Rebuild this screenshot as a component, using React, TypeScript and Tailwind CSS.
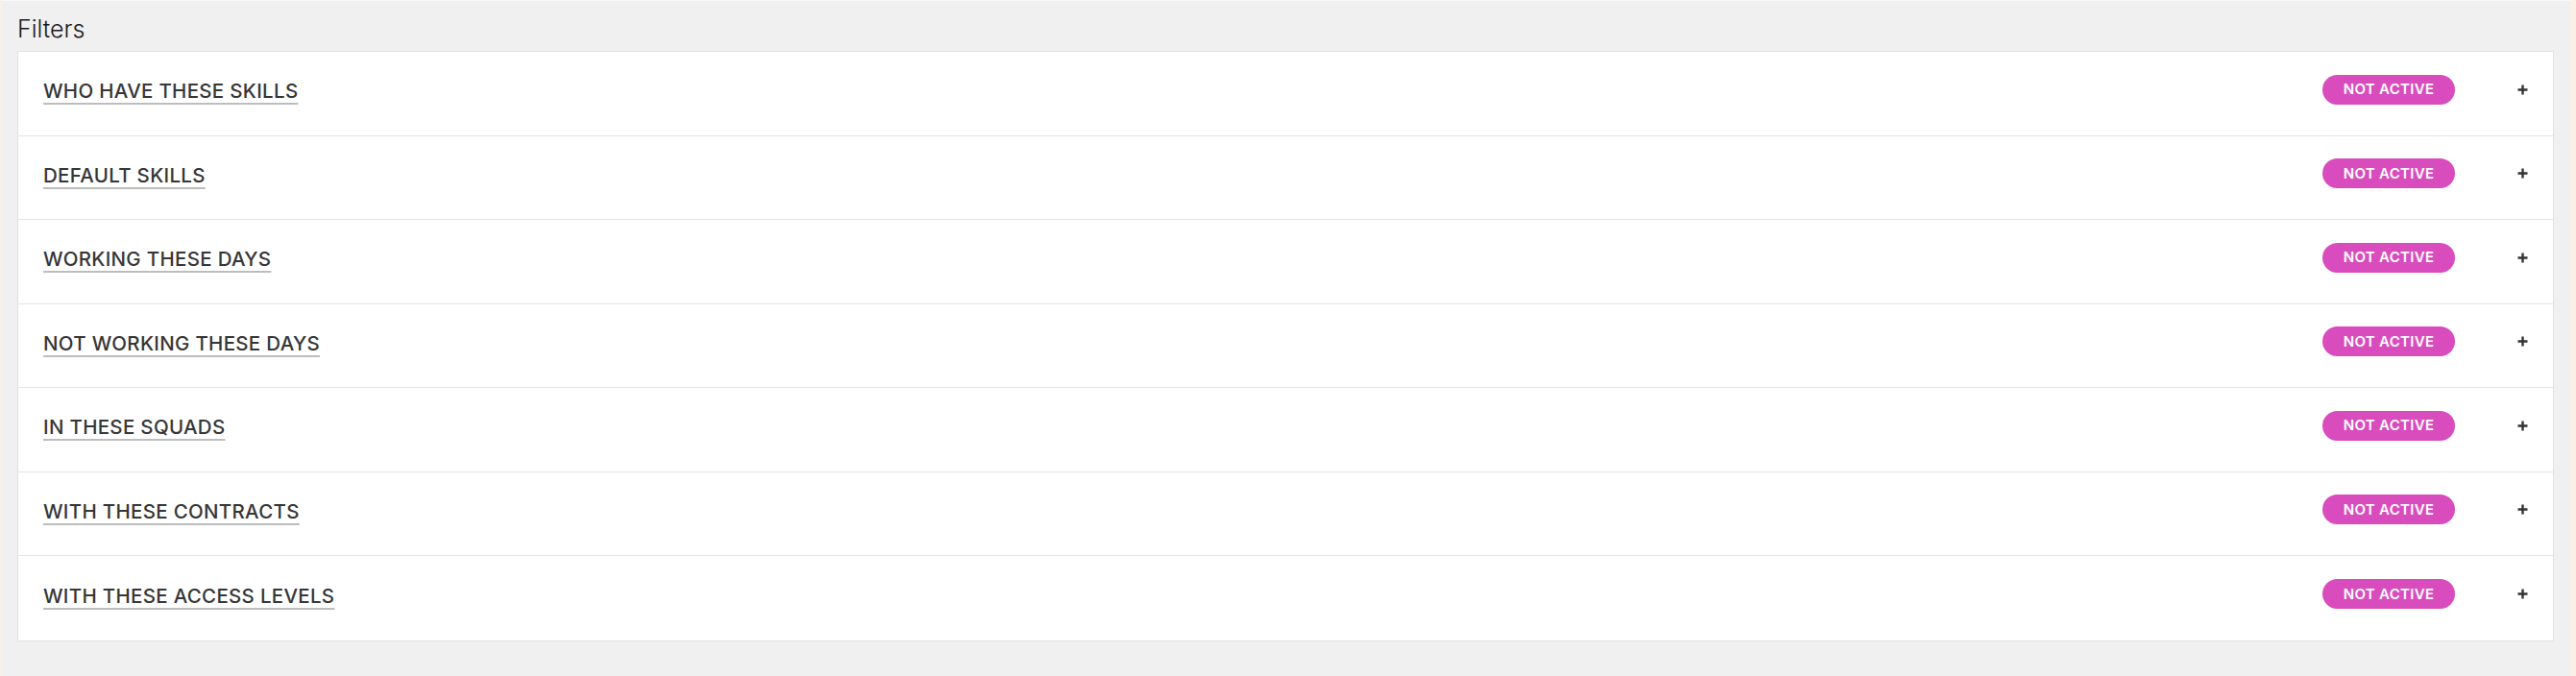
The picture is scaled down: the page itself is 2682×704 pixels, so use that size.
const filters = [
  "WHO HAVE THESE SKILLS",
  "DEFAULT SKILLS",
  "WORKING THESE DAYS",
  "NOT WORKING THESE DAYS",
  "IN THESE SQUADS",
  "WITH THESE CONTRACTS",
  "WITH THESE ACCESS LEVELS",
];

function PlusIcon() {
  return (
    <svg width="11" height="11" viewBox="0 0 11 11" className="text-[#333]">
      <path d="M5.5 0.5v10M0.5 5.5h10" stroke="currentColor" strokeWidth="2.4" />
    </svg>
  );
}

function FilterRow({ label, last }: { label: string; last: boolean }) {
  return (
    <div
      className={`flex h-[87.5px] items-center justify-between pl-[26px] pr-[26px] ${
        last ? "" : "border-b border-[#e4e4e4]"
      }`}
    >
      <span className="mb-[3px] text-[20.5px] font-medium tracking-[0.3px] text-[#363636] underline decoration-[#bdbdbd] decoration-2 underline-offset-[5px]">
        {label}
      </span>
      <div className="mb-[8px] flex items-center gap-[65px]">
        <span className="flex h-[31px] w-[138px] items-center justify-center rounded-full bg-[#d84cbe] text-[15px] font-semibold tracking-[0.3px] text-white">
          NOT ACTIVE
        </span>
        <PlusIcon />
      </div>
    </div>
  );
}

export default function App() {
  return (
    <div className="flex h-[704px] w-full bg-[#faf1e6] font-['Inter',sans-serif]">
      <div className="w-[2px]" />
      <main className="flex-1 border-t border-[#f8f8f8] bg-[#f0f0f0] pl-[16px] pr-[17px]">
        <h2 className="h-[52px] pt-[14px] text-[25px] leading-[30px] font-light text-[#1a1a1a]">Filters</h2>
        <div className="border border-[#e2e2e2] bg-white">
          {filters.map((f, i) => (
            <FilterRow key={f} label={f} last={i === filters.length - 1} />
          ))}
        </div>
      </main>
      <div className="w-[6px]" />
    </div>
  );
}
